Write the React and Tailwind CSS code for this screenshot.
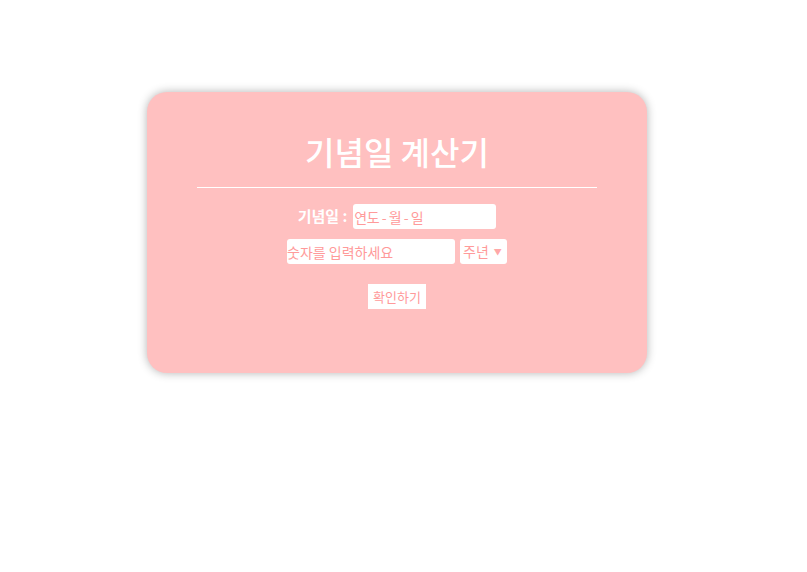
import React, { useState } from "react";

const App = () => {
  const [date, setDate] = useState("");
  const [num, setNum] = useState("");
  const [unit, setUnit] = useState("주년");

  return (
    <div className="min-h-[572px] w-full bg-white pt-[92px] font-['Noto_Sans_CJK_KR','Noto_Sans',sans-serif]">
      <div className="ml-[147px] w-[500px] h-[281px] rounded-[20px] bg-[#ffc0c0] shadow-[0_0_10px_rgba(0,0,0,0.3)] flex flex-col items-center pt-[37px]">
        <h1 className="text-[32px] leading-[44px] font-medium text-white">기념일 계산기</h1>
        <div className="w-[400px] h-px bg-white mt-[14px]" />

        {/* 기념일 입력 */}
        <div className="flex items-center mt-[16px] h-[25px]">
          <span className="text-[15px] font-semibold text-white mr-[6px]">기념일 :</span>
          <input
            type="text"
            value={date}
            onChange={(e) => setDate(e.target.value)}
            placeholder="연도 - 월 - 일"
            className="w-[143px] h-[25px] rounded-[3px] bg-white px-px text-[14px] tracking-[-0.5px] text-[#ff9a9a] placeholder:text-[#ff9a9a] outline-none"
          />
        </div>

        {/* 숫자 + 단위 */}
        <div className="flex items-center gap-[5px] mt-[10px]">
          <input
            type="text"
            value={num}
            onChange={(e) => setNum(e.target.value)}
            placeholder="숫자를 입력하세요"
            className="w-[168px] h-[25px] rounded-[3px] bg-white px-0 text-[14px] text-[#ff9a9a] placeholder:text-[#ff9a9a] outline-none"
          />
          <div className="w-[47px] h-[25px] rounded-[3px] bg-white flex items-center pl-[3px] text-[14px] text-[#ff9a9a]">
            <span>{unit}</span>
            <span className="ml-[5px] text-[8px] text-[#ffa8a8]">▼</span>
          </div>
        </div>

        <button
          onClick={() => setUnit(unit)}
          className="mt-[20px] w-[58px] h-[25px] bg-white text-[13px] text-[#ff9a9a]"
        >
          확인하기
        </button>
      </div>
    </div>
  );
};

export default App;
